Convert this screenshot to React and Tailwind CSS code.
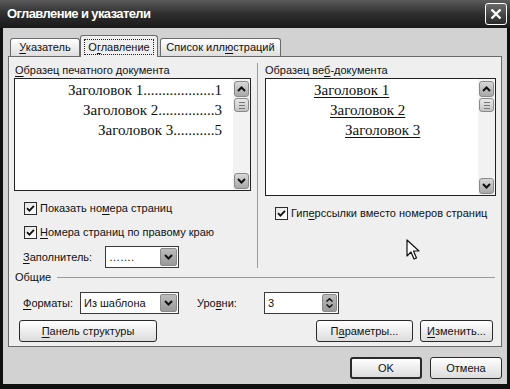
import React from "react";

const ui = { fontFamily: '"Liberation Sans", Arial, sans-serif' };
const serif = { fontFamily: '"Liberation Serif", "Times New Roman", serif' };

// подчёркнутая буква-акселератор
const K = ({ children }) => <u className="underline underline-offset-2">{children}</u>;

function Arrow({ dir = "down" }) {
  return (
    <svg width="9" height="6" viewBox="0 0 9 6" className={dir === "up" ? "rotate-180" : ""}>
      <path d="M1 1 L4.5 4.5 L8 1" fill="none" stroke="#111" strokeWidth="2" />
    </svg>
  );
}

function ScrollBtn({ dir }) {
  return (
    <div className="w-[15px] h-[16px] rounded-[3px] border border-[#8a8a8a] bg-gradient-to-b from-[#d8d8d8] to-[#a8a8a8] flex items-center justify-center">
      <Arrow dir={dir} />
    </div>
  );
}

function Scrollbar() {
  return (
    <div className="w-[17px] shrink-0 bg-[#f2f2f2] flex flex-col items-center pt-[2px] pb-[1px]">
      <ScrollBtn dir="up" />
      <div className="w-[15px] h-[14px] mt-[1px] rounded-[3px] border border-[#8a8a8a] bg-gradient-to-b from-[#e8e8e8] to-[#c4c4c4] flex flex-col items-center justify-center gap-[2px]">
        <div className="w-[6px] h-px bg-[#777]" />
        <div className="w-[6px] h-px bg-[#777]" />
        <div className="w-[6px] h-px bg-[#777]" />
      </div>
      <div className="flex-1" />
      <ScrollBtn dir="down" />
    </div>
  );
}

function Check({ children }) {
  return (
    <div className="flex items-center gap-[3px] h-[16px] whitespace-nowrap">
      <div className="w-[13px] h-[13px] shrink-0 border border-[#2b2b2b] bg-gradient-to-br from-[#e4e4e4] to-white flex items-center justify-center">
        <svg width="9" height="9" viewBox="0 0 9 9">
          <path d="M1 4.2 L3.4 6.6 L8 1.8" fill="none" stroke="#111" strokeWidth="1.8" />
        </svg>
      </div>
      <span>{children}</span>
    </div>
  );
}

function Select({ value, className }) {
  return (
    <div className={`h-[22px] border border-[#3a3a3a] bg-white flex items-center pl-[3px] pr-[1px] ${className}`}>
      <span className="flex-1">{value}</span>
      <div className="w-[17px] h-[18px] rounded-[2px] bg-gradient-to-b from-[#bcbcbc] to-[#9a9a9a] border border-[#8a8a8a] flex items-center justify-center">
        <Arrow />
      </div>
    </div>
  );
}

function Btn({ children, className = "", strong }) {
  return (
    <div
      className={`h-[22px] rounded-[3px] bg-gradient-to-b from-white to-[#dcdcdc] flex items-center justify-center whitespace-nowrap ${
        strong ? "border-2 border-[#2a2a2a]" : "border border-[#2a2a2a]"
      } ${className}`}
    >
      {children}
    </div>
  );
}

const toc = [
  { title: "Заголовок 1", dots: "...................", page: "1" },
  { title: "Заголовок 2", dots: "...............", page: "3" },
  { title: "Заголовок 3", dots: "...........", page: "5" },
];

export default function App() {
  return (
    <div className="w-[510px] h-[389px] bg-[#101010] flex flex-col text-[11px] text-[#111]" style={ui}>
      {/* заголовок окна */}
      <div className="h-[28px] bg-gradient-to-b from-[#5c5c5c] via-[#2e2e2e] to-[#1a1a1a] flex items-center pl-[7px] pr-[3px]">
        <span className="flex-1 text-white font-bold text-[13px] tracking-[-0.6px]">
          Оглавление и указатели
        </span>
        <div className="w-[22px] h-[22px] rounded-[3px] border border-white bg-gradient-to-b from-[#6a6a6a] to-[#2a2a2a] flex items-center justify-center">
          <svg width="12" height="12" viewBox="0 0 12 12">
            <path d="M1.5 1.5 L10.5 10.5 M10.5 1.5 L1.5 10.5" stroke="white" strokeWidth="2.4" />
          </svg>
        </div>
      </div>

      <div className="flex-1 mx-[3px] mb-[5px] bg-[#d2d2d2] flex flex-col pl-[5px] pr-[5px] pt-[7px]">
        {/* вкладки */}
        <div className="flex items-end h-[21px] pl-[2px] relative z-10">
          <div className="h-[18px] w-[70px] border border-b-0 border-[#6a6a6a] rounded-t-[3px] bg-gradient-to-b from-white to-[#dedede] flex items-center justify-center">
            <span><K>У</K>казатель</span>
          </div>
          <div className="h-[22px] w-[78px] -mb-px border border-b-0 border-[#6a6a6a] rounded-t-[3px] bg-[#efefef] flex items-center justify-center">
            <span className="border border-dotted border-[#222] px-[3px] leading-[14px]">О<K>г</K>лавление</span>
          </div>
          <div className="h-[18px] w-[121px] ml-[2px] border border-b-0 border-[#6a6a6a] rounded-t-[3px] bg-gradient-to-b from-white to-[#dedede] flex items-center justify-center">
            <span>Список илл<K>ю</K>страций</span>
          </div>
        </div>

        {/* панель вкладки */}
        <div className="h-[291px] border border-[#6a6a6a] bg-[#efefef] pl-[5px] pr-[5px] pt-[6px] flex flex-col">
          <div className="flex h-[205px]">
            <div className="w-[237px] shrink-0 flex flex-col">
              <div className="h-[14px] leading-[14px] pl-px"><K>О</K>бразец печатного документа</div>
              <div className="mt-px h-[118px] border border-[#222] bg-white flex">
                <div className="flex-1 min-w-0 pr-[11px] pt-px text-[15px] leading-[20px] flex flex-col items-end" style={serif}>
                  {toc.map((t) => (
                    <div key={t.title} className="h-[20px] flex items-end whitespace-nowrap">
                      {t.title}
                      {t.dots}
                      {t.page}
                    </div>
                  ))}
                </div>
                <Scrollbar />
              </div>
              <div className="mt-[9px] pl-[10px] flex flex-col gap-[8px]">
                <Check>Показать но<K>м</K>ера страниц</Check>
                <Check><K>Н</K>омера страниц по правому краю</Check>
              </div>
              <div className="mt-[6px] pl-[9px] flex items-center">
                <span className="w-[82px]"><K>З</K>аполнитель:</span>
                <Select value="……." className="w-[74px]" />
              </div>
            </div>

            <div className="ml-[6px] pl-[7px] border-l border-[#9a9a9a] w-[239px] shrink-0 flex flex-col">
              <div className="h-[14px] leading-[14px]">Образец ве<K>б</K>-документа</div>
              <div className="mt-px h-[118px] border border-[#222] bg-white flex">
                <div className="flex-1 min-w-0 pt-px text-[15px] leading-[20px]" style={serif}>
                  <div className="h-[20px] flex items-end pl-[48px]"><span className="underline underline-offset-2">Заголовок 1</span></div>
                  <div className="h-[20px] flex items-end pl-[64px]"><span className="underline underline-offset-2">Заголовок 2</span></div>
                  <div className="h-[20px] flex items-end pl-[79px]"><span className="underline underline-offset-2">Заголовок 3</span></div>
                </div>
                <Scrollbar />
              </div>
              <div className="mt-[9px] pl-[10px] flex flex-col">
                <Check>Гип<K>е</K>рссылки вместо номеров страниц</Check>
              </div>
              <div className="flex-1 relative">
                <svg className="absolute left-[141px] top-[18px]" width="14" height="22" viewBox="0 0 14 22">
                  <path d="M1 1 L1 17 L5 13 L8 20 L10.5 19 L7.5 12 L13 12 Z" fill="white" stroke="#111" strokeWidth="1.2" strokeLinejoin="round" />
                </svg>
              </div>
            </div>
          </div>

          {/* Общие */}
          <div className="mt-[2px] h-[14px] flex items-center pl-px">
            <span>Общие</span>
            <div className="flex-1 ml-[6px] mr-[1px] h-px bg-[#9a9a9a]" />
          </div>
          <div className="mt-[8px] flex items-center pl-[9px]">
            <span className="w-[57px]"><K>Ф</K>орматы:</span>
            <Select value="Из шаблона" className="w-[99px]" />
            <span className="ml-[18px] w-[67px]">Уро<K>в</K>ни:</span>
            <div className="w-[75px] h-[22px] border border-[#3a3a3a] bg-white flex items-center pl-[3px] pr-px">
              <span className="flex-1">3</span>
              <div className="w-[15px] h-[18px] rounded-[2px] bg-gradient-to-b from-[#bcbcbc] to-[#9a9a9a] border border-[#8a8a8a] flex flex-col items-center justify-center gap-[2px]">
                <svg width="7" height="4" viewBox="0 0 7 4"><path d="M0.5 3.5 L3.5 0.8 L6.5 3.5" fill="none" stroke="#111" strokeWidth="1.5" /></svg>
                <svg width="7" height="4" viewBox="0 0 7 4"><path d="M0.5 0.5 L3.5 3.2 L6.5 0.5" fill="none" stroke="#111" strokeWidth="1.5" /></svg>
              </div>
            </div>
          </div>
          <div className="mt-[6px] flex items-center pl-[5px]">
            <Btn className="w-[138px]"><K>П</K>анель структуры</Btn>
            <div className="flex-1" />
            <Btn className="w-[97px]">П<K>а</K>раметры...</Btn>
            <Btn className="w-[73px] ml-[7px] mr-[3px]"><K>И</K>зменить...</Btn>
          </div>
        </div>

        {/* нижние кнопки */}
        <div className="mt-[10px] flex justify-end">
          <Btn strong className="w-[72px] h-[22px]">OK</Btn>
          <Btn className="w-[72px] ml-[8px]">Отмена</Btn>
        </div>
      </div>
    </div>
  );
}
